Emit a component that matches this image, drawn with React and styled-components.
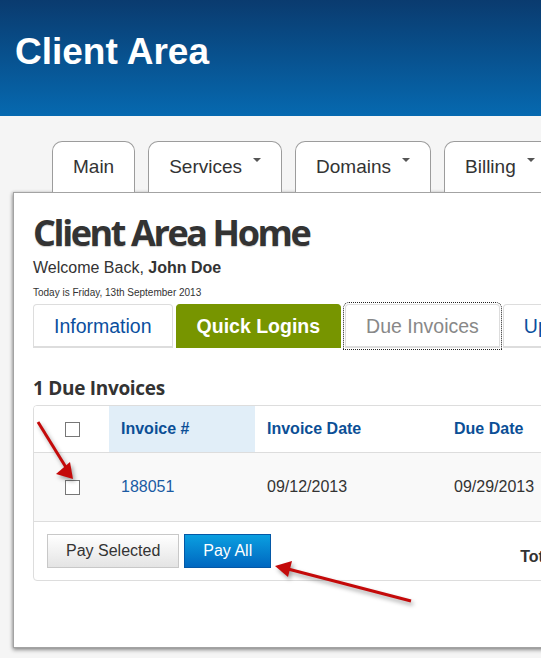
import React from "react";
import styled, { createGlobalStyle } from "styled-components";

const GlobalStyle = createGlobalStyle`
  html, body {
    margin: 0;
    padding: 0;
    overflow: hidden;
    background: #f5f5f5;
    font-family: "Liberation Sans", Arial, sans-serif;
    color: #333;
  }
`;

const Page = styled.div`
  position: relative;
  width: 541px;
  height: 658px;
  overflow: hidden;
`;

const Header = styled.header`
  height: 116px;
  box-sizing: border-box;
  padding: 30px 15px 0;
  background: linear-gradient(#0a3b6f, #0669b0);
`;

const SiteTitle = styled.h1`
  margin: 0;
  font-size: 37px;
  line-height: 44px;
  font-weight: 700;
  color: #fff;
  white-space: nowrap;
`;

const MainNav = styled.ul`
  display: flex;
  gap: 13px;
  margin: 0;
  padding: 25px 0 0 52px;
  list-style: none;
  white-space: nowrap;
`;

const MainTab = styled.li`
  display: flex;
  align-items: flex-start;
  flex-shrink: 0;
  height: 51px;
  box-sizing: border-box;
  padding: 15px 20px 0;
  border: 1px solid #9c9c9c;
  border-bottom: none;
  border-radius: 10px 10px 0 0;
  background: #fff;
  font-size: 19px;
  line-height: 20px;
  color: #333;
`;

const Caret = styled.span`
  display: inline-block;
  margin: 1px 0 0 11px;
  border-top: 4px solid #555;
  border-left: 4px solid transparent;
  border-right: 4px solid transparent;
`;

const Panel = styled.section`
  width: 640px;
  height: 456px;
  margin-left: 13px;
  box-sizing: border-box;
  padding: 0 19px;
  background: #fff;
  border: 1px solid #a3a3a3;
  box-shadow: 0 2px 4px rgba(0, 0, 0, 0.4), -1px 0 3px rgba(0, 0, 0, 0.15);
`;

const PageTitle = styled.h2`
  margin: 20px 0 0;
  font-family: "Open Sans", sans-serif;
  font-size: 36px;
  line-height: 40px;
  font-weight: 700;
  letter-spacing: -2.4px;
  color: #333;
  text-shadow: 0 1px 1px rgba(0, 0, 0, 0.2);
`;

const Welcome = styled.p`
  margin: 5px 0 0;
  font-size: 16px;
  line-height: 20px;
  b {
    font-weight: 700;
  }
`;

const Today = styled.p`
  margin: 8px 0 0;
  font-size: 10px;
  line-height: 14px;
`;

const SubTabs = styled.ul`
  display: flex;
  gap: 3px;
  margin: 4px 0 0;
  padding: 0;
  list-style: none;
  white-space: nowrap;
`;

const SubTab = styled.li`
  flex-shrink: 0;
  height: 44px;
  box-sizing: border-box;
  padding: 11px 20px 0;
  border: 1px solid ${(p) => (p.$active ? "#779500" : "#ddd")};
  border-bottom-width: 2px;
  border-radius: 4px 4px 0 0;
  background: ${(p) => (p.$active ? "#779500" : "#fff")};
  font-size: 19.5px;
  line-height: 20px;
  font-weight: ${(p) => (p.$active ? 700 : 400)};
  color: ${(p) => (p.$active ? "#fff" : p.$muted ? "#888" : "#0b4f9e")};
  outline: ${(p) => (p.$focused ? "1px dotted #222" : "none")};
  outline-offset: 1px;
  margin-left: ${(p) => (p.$focused ? "1px" : "0")};
`;

const SectionTitle = styled.h3`
  margin: 28px 0 0;
  font-family: "Open Sans", sans-serif;
  font-size: 19px;
  line-height: 24px;
  font-weight: 700;
  letter-spacing: -0.3px;
  color: #333;
`;

const InvoiceTable = styled.div`
  margin-top: 5px;
  width: 620px;
  border: 1px solid #ddd;
  border-radius: 4px;
  overflow: hidden;
`;

const Row = styled.div`
  display: grid;
  grid-template-columns: 75px 146px 187px 160px 1fr;
  height: ${(p) => (p.$head ? "46px" : "68px")};
  border-bottom: 1px solid #ddd;
  background: ${(p) => (p.$head ? "#fff" : "#f9f9f9")};
`;

const Cell = styled.div`
  display: flex;
  align-items: center;
  padding-left: ${(p) => (p.$center ? "0" : "12px")};
  justify-content: ${(p) => (p.$center ? "center" : "flex-start")};
  background: ${(p) => (p.$sorted ? "#e1eef8" : "transparent")};
  font-size: 16px;
  font-weight: ${(p) => (p.$head ? 700 : 400)};
  color: ${(p) => (p.$head ? "#0b4f96" : p.$link ? "#1b5ba3" : "#333")};
  white-space: nowrap;
`;

const Check = styled.span`
  width: 13px;
  height: 13px;
  border: 1px solid #777;
  background: #fff;
  margin-left: 1px;
`;

const Footer = styled.div`
  display: flex;
  align-items: center;
  height: 58px;
  padding: 0 0 0 13px;
`;

const Button = styled.button`
  flex-shrink: 0;
  height: 34px;
  padding: 0 18px;
  margin-right: 5px;
  font-family: "Liberation Sans", Arial, sans-serif;
  font-size: 16px;
  line-height: 20px;
  white-space: nowrap;
  border-radius: 0;
  border: 1px solid ${(p) => (p.$primary ? "#0458a6" : "#c8c8c8")};
  background: ${(p) =>
    p.$primary
      ? "linear-gradient(#0a9fe0, #0067c0)"
      : "linear-gradient(#ffffff, #e4e4e4)"};
  color: ${(p) => (p.$primary ? "#fff" : "#333")};
  cursor: pointer;
`;

const Total = styled.div`
  flex-shrink: 0;
  margin-left: 244px;
  padding-top: 12px;
  font-size: 16px;
  font-weight: 700;
  white-space: nowrap;
`;

const Arrows = styled.svg`
  position: absolute;
  top: 0;
  left: 0;
  pointer-events: none;
  filter: drop-shadow(2px 3px 2px rgba(0, 0, 0, 0.35));
`;

const invoices = [{ id: "188051", date: "09/12/2013", due: "09/29/2013" }];

const App = () => {
  return (
    <Page>
      <GlobalStyle />
      <Header>
        <SiteTitle>Client Area</SiteTitle>
      </Header>
      <MainNav>
        <MainTab>Main</MainTab>
        <MainTab>
          Services<Caret />
        </MainTab>
        <MainTab>
          Domains<Caret />
        </MainTab>
        <MainTab>
          Billing<Caret />
        </MainTab>
        <MainTab>Support</MainTab>
      </MainNav>
      <Panel>
        <PageTitle>Client Area Home</PageTitle>
        <Welcome>
          Welcome Back, <b>John Doe</b>
        </Welcome>
        <Today>Today is Friday, 13th September 2013</Today>
        <SubTabs>
          <SubTab>Information</SubTab>
          <SubTab $active>Quick Logins</SubTab>
          <SubTab $muted $focused>
            Due Invoices
          </SubTab>
          <SubTab>Upcoming Renewals</SubTab>
        </SubTabs>
        <SectionTitle>1 Due Invoices</SectionTitle>
        <InvoiceTable>
          <Row $head>
            <Cell $center>
              <Check />
            </Cell>
            <Cell $head $sorted>
              Invoice #
            </Cell>
            <Cell $head>Invoice Date</Cell>
            <Cell $head>Due Date</Cell>
            <Cell $head>Total</Cell>
          </Row>
          {invoices.map((inv) => (
            <Row key={inv.id}>
              <Cell $center>
                <Check />
              </Cell>
              <Cell $link>{inv.id}</Cell>
              <Cell>{inv.date}</Cell>
              <Cell>{inv.due}</Cell>
              <Cell>$10.00 USD</Cell>
            </Row>
          ))}
          <Footer>
            <Button>Pay Selected</Button>
            <Button $primary>Pay All</Button>
            <Total>Total Due: $10.00 USD</Total>
          </Footer>
        </InvoiceTable>
      </Panel>
      <Arrows width="541" height="658" viewBox="0 0 541 658">
        <line x1="38" y1="422" x2="67" y2="469" stroke="#c40a0a" strokeWidth="3" />
        <polygon points="73,479 56,474 70,462" fill="#c40a0a" />
        <line x1="411" y1="601" x2="288" y2="569" stroke="#c40a0a" strokeWidth="3" />
        <polygon points="275,566 292,561 288,577" fill="#c40a0a" />
      </Arrows>
    </Page>
  );
};

export default App;
